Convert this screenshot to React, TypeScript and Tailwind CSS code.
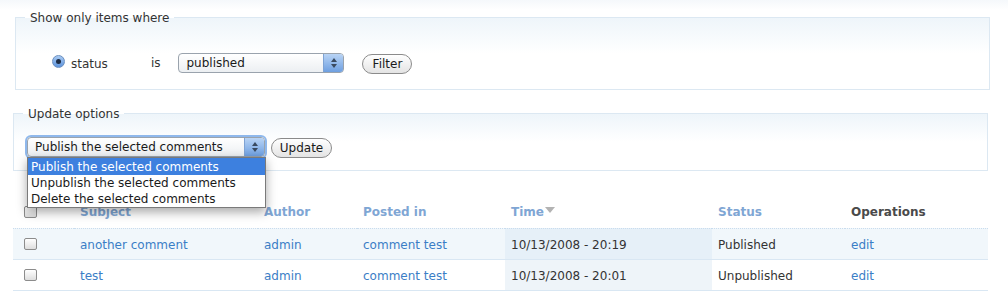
import React from 'react';

const FONT = { fontFamily: '"DejaVu Sans", Verdana, sans-serif' };

function Arrows() {
  return (
    <svg width="8" height="12" viewBox="0 0 8 12" className="block">
      <path d="M4 1 L7 5 L1 5 Z" fill="#3a4a60" />
      <path d="M4 11 L7 7 L1 7 Z" fill="#3a4a60" />
    </svg>
  );
}

function MacSelect({ label, width, focused }: { label: string; width: string; focused?: boolean }) {
  return (
    <div
      className={`flex h-[20px] ${width} rounded-[4px] border border-[#9aa3ad] bg-gradient-to-b from-white to-[#eceff2] overflow-hidden ${
        focused ? 'shadow-[0_0_0_2px_#8fb8ec]' : ''
      }`}
    >
      <span className="flex-1 pl-[7px] text-[12px] leading-[18px] text-[#1a1a1a] truncate">{label}</span>
      <span className="w-[20px] flex items-center justify-center border-l border-[#7fa3d4] bg-gradient-to-b from-[#b9d4f5] to-[#6e9fe0]">
        <Arrows />
      </span>
    </div>
  );
}

function PillButton({ children, width }: { children: React.ReactNode; width: string }) {
  return (
    <button
      type="button"
      className={`h-[20px] ${width} rounded-full border border-[#8b8b8b] bg-gradient-to-b from-white to-[#e4e4e4] text-[12px] leading-[18px] text-[#1a1a1a]`}
    >
      {children}
    </button>
  );
}

function Checkbox() {
  return (
    <span className="block w-[13px] h-[12px] rounded-[2px] border border-[#8c8c8c] bg-gradient-to-b from-white to-[#dedede]" />
  );
}

const rows = [
  { subject: 'another comment', author: 'admin', posted: 'comment test', time: '10/13/2008 - 20:19', status: 'Published' },
  { subject: 'test', author: 'admin', posted: 'comment test', time: '10/13/2008 - 20:01', status: 'Unpublished' },
];

export default function App() {
  return (
    <div className="w-[1008px] h-[307px] bg-white overflow-hidden" style={FONT}>
      <div className="h-[10px] bg-gradient-to-b from-[#f5f8fb] to-white" />

      {/* Filter fieldset */}
      <fieldset className="ml-[15px] w-[975px] h-[80px] border border-[#dce8f2] bg-gradient-to-b from-[#eef5fa] via-white to-white">
        <legend className="ml-[9px] px-[5px] text-[12px] leading-[14px] text-[#333] relative top-[1px]">Show only items where</legend>
        <div className="flex items-center mt-[27px] pl-[36px]">
          <span className="w-[13px] h-[13px] rounded-full border border-[#6b8fbf] bg-gradient-to-b from-[#a9cbf3] to-[#5d93dc] flex items-center justify-center mt-[-4px]">
            <span className="w-[5px] h-[5px] rounded-full bg-[#1d2c44]" />
          </span>
          <span className="ml-[6px] text-[12px] text-[#333] mt-[2px]">status</span>
          <span className="ml-[43px] text-[12px] text-[#333]">is</span>
          <div className="ml-[18px]">
            <MacSelect label="published" width="w-[166px]" />
          </div>
          <div className="ml-[18px]">
            <PillButton width="w-[50px]">Filter</PillButton>
          </div>
        </div>
      </fieldset>

      {/* Update options fieldset */}
      <fieldset className="ml-[13px] mt-[16px] w-[975px] h-[65px] border border-[#dce8f2] bg-gradient-to-b from-[#eef5fa] via-white to-white">
        <legend className="ml-[9px] px-[5px] text-[12px] leading-[14px] text-[#333] relative top-[1px]">Update options</legend>
        <div className="flex items-center mt-[15px] pl-[13px] relative">
          <MacSelect label="Publish the selected comments" width="w-[238px]" focused />
          <div className="ml-[6px]">
            <PillButton width="w-[61px]">Update</PillButton>
          </div>
          <div className="absolute left-[13px] top-[22px] w-[239px] border border-[#7a7a7a] bg-white shadow-[0_4px_10px_rgba(0,0,0,0.35)] z-10 text-[12px] leading-[16px] text-[#1a1a1a]">
            <div className="px-[3px] pt-[1px] bg-[#3d80df] text-white">Publish the selected comments</div>
            <div className="px-[3px]">Unpublish the selected comments</div>
            <div className="px-[3px]">Delete the selected comments</div>
          </div>
        </div>
      </fieldset>

      {/* Comments table */}
      <table className="ml-[13px] mt-[25px] w-[975px] table-fixed border-collapse text-[12px]">
        <colgroup>
          <col className="w-[61px]" />
          <col className="w-[184px]" />
          <col className="w-[99px]" />
          <col className="w-[148px]" />
          <col className="w-[207px]" />
          <col className="w-[133px]" />
          <col />
        </colgroup>
        <thead>
          <tr className="h-[32px] border-b border-dotted border-[#c9dcee] text-left font-bold text-[#7fa6d4]">
            <th className="pl-[11px]"><Checkbox /></th>
            <th className="pl-[6px]">Subject</th>
            <th className="pl-[6px]">Author</th>
            <th className="pl-[6px]">Posted in</th>
            <th className="pl-[6px]">
              <span className="inline-flex items-center">
                Time
                <svg width="10" height="6" viewBox="0 0 10 6" className="ml-[1px] mt-[-3px]">
                  <path d="M0 0 L10 0 L5 6 Z" fill="#b3b3b3" />
                </svg>
              </span>
            </th>
            <th className="pl-[6px]">Status</th>
            <th className="pl-[6px] text-[#4a4a4a]">Operations</th>
          </tr>
        </thead>
        <tbody>
          {rows.map((r, i) => (
            <tr key={r.subject} className={`h-[31px] border-b border-[#d9e7f3] ${i === 0 ? 'bg-[#f1f7fb]' : 'bg-white'}`}>
              <td className="pl-[11px]"><Checkbox /></td>
              <td className="pl-[6px] pt-[2px] text-[#3b7ec6]">{r.subject}</td>
              <td className="pl-[6px] pt-[2px] text-[#3b7ec6]">{r.author}</td>
              <td className="pl-[6px] pt-[2px] text-[#3b7ec6]">{r.posted}</td>
              <td className={`pl-[6px] pt-[2px] text-[#333] ${i === 0 ? 'bg-[#e6f0f8]' : 'bg-[#eef4f9]'}`}>{r.time}</td>
              <td className="pl-[6px] pt-[2px] text-[#333]">{r.status}</td>
              <td className="pl-[6px] pt-[2px] text-[#3b7ec6]">edit</td>
            </tr>
          ))}
        </tbody>
      </table>
    </div>
  );
}
